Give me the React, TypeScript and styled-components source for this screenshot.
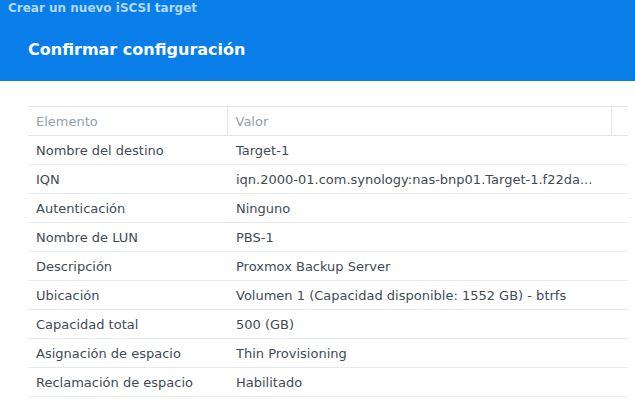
import React from 'react';
import styled, { createGlobalStyle } from 'styled-components';

type Row = {
  label: string;
  value: string;
};

const rows: Row[] = [
  { label: 'Nombre del destino', value: 'Target-1' },
  { label: 'IQN', value: 'iqn.2000-01.com.synology:nas-bnp01.Target-1.f22da...' },
  { label: 'Autenticación', value: 'Ninguno' },
  { label: 'Nombre de LUN', value: 'PBS-1' },
  { label: 'Descripción', value: 'Proxmox Backup Server' },
  { label: 'Ubicación', value: 'Volumen 1 (Capacidad disponible: 1552 GB) - btrfs' },
  { label: 'Capacidad total', value: '500 (GB)' },
  { label: 'Asignación de espacio', value: 'Thin Provisioning' },
  { label: 'Reclamación de espacio', value: 'Habilitado' },
];

const GlobalStyle = createGlobalStyle`
  html, body {
    margin: 0;
    padding: 0;
    background: #ffffff;
  }

  body {
    font-family: 'DejaVu Sans', Verdana, sans-serif;
  }
`;

const App = () => {
  return (
    <>
      <GlobalStyle />
      <Window>
        <Header>
          <Caption>Crear un nuevo iSCSI target</Caption>
          <Title>Confirmar configuración</Title>
        </Header>
        <Content>
          <Grid>
            <colgroup>
              <col style={{ width: 199 }} />
              <col style={{ width: 384 }} />
              <col style={{ width: 17 }} />
            </colgroup>
            <thead>
              <tr>
                <HeadCell>Elemento</HeadCell>
                <HeadCell>Valor</HeadCell>
                <HeadCell $gutter />
              </tr>
            </thead>
            <tbody>
              {rows.map((row) => (
                <BodyRow key={row.label}>
                  <Cell>{row.label}</Cell>
                  <Cell colSpan={2}>
                    <Value>{row.value}</Value>
                  </Cell>
                </BodyRow>
              ))}
            </tbody>
          </Grid>
        </Content>
      </Window>
    </>
  );
};

export default App;

const Window = styled.div`
  width: 635px;
  height: 407px;
  overflow: hidden;
  background: #ffffff;
`;

const Header = styled.div`
  height: 81px;
  background: #0a7ee8;
  box-sizing: border-box;
`;

const Caption = styled.div`
  padding: 0 8px;
  height: 16px;
  line-height: 16px;
  font-size: 12px;
  font-weight: 700;
  color: #b3d9ff;
`;

const Title = styled.h1`
  margin: 0;
  padding: 24px 28px 0;
  font-size: 16px;
  line-height: 20px;
  font-weight: 700;
  color: #ffffff;
`;

const Content = styled.div`
  padding: 25px 7px 0 28px;
`;

const Grid = styled.table`
  width: 600px;
  border-collapse: collapse;
  table-layout: fixed;
  font-size: 13px;
`;

const HeadCell = styled.th<{ $gutter?: boolean }>`
  height: 28px;
  padding: 0 8px;
  text-align: left;
  font-weight: 400;
  color: #95a0ab;
  border-top: 1px solid #e1e7ee;
  border-bottom: 1px solid #e1e7ee;
  border-left: ${({ $gutter }) => ($gutter ? '1px solid #e1e7ee' : 'none')};

  & + & {
    border-left: 1px solid #e1e7ee;
  }
`;

const BodyRow = styled.tr`
  height: 29px;
  border-bottom: 1px solid #e6ebf0;
`;

const Cell = styled.td`
  padding: 0 8px;
  color: #414b55;
  white-space: nowrap;
  overflow: hidden;

  & + & {
    padding-left: 9px;
  }
`;

const Value = styled.div`
  white-space: nowrap;
`;
